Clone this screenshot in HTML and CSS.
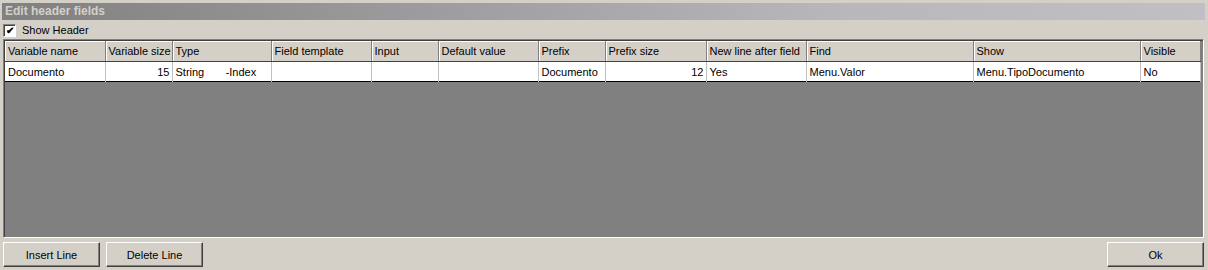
FILE: index.html
```html
<!DOCTYPE html>
<html>
<head>
<meta charset="utf-8">
<title>Edit header fields</title>
<link rel="stylesheet" href="styles.css">
</head>
<body>
<div class="window">
  <div class="caption">Edit header fields</div>
  <label class="check"><span class="box">&#10004;</span>Show Header</label>
  <div class="panel">
    <table class="grid">
      <colgroup>
        <col style="width:100px"><col style="width:67px"><col style="width:99px"><col style="width:100px">
        <col style="width:67px"><col style="width:100px"><col style="width:67px"><col style="width:101px">
        <col style="width:100px"><col style="width:167px"><col style="width:167px"><col style="width:60px">
      </colgroup>
      <tr class="head">
        <th>Variable name</th><th>Variable size</th><th>Type</th><th>Field template</th>
        <th>Input</th><th>Default value</th><th>Prefix</th><th>Prefix size</th>
        <th>New line after field</th><th>Find</th><th>Show</th><th>Visible</th>
      </tr>
      <tr>
        <td>Documento</td><td class="num">15</td><td>String&nbsp;&nbsp;&nbsp;&nbsp;&nbsp;&nbsp;&nbsp;-Index</td><td></td>
        <td></td><td></td><td>Documento</td><td class="num">12</td>
        <td>Yes</td><td>Menu.Valor</td><td>Menu.TipoDocumento</td><td>No</td>
      </tr>
    </table>
  </div>
  <div class="buttons">
    <button class="btn">Insert Line</button>
    <button class="btn">Delete Line</button>
    <span class="spacer"></span>
    <button class="btn">Ok</button>
  </div>
</div>
</body>
</html>
```
FILE: styles.css
```css
html, body {
  margin: 0;
  padding: 0;
  background: #d4d0c8;
}

body {
  font-family: "Liberation Sans", Arial, sans-serif;
  font-size: 11px;
  color: #000;
}

.window {
  width: 1208px;
  height: 270px;
  padding-top: 3px;
  box-sizing: border-box;
  display: flex;
  flex-direction: column;
}

.caption {
  margin: 0 3px 0 2px;
  height: 17px;
  line-height: 17px;
  padding-left: 3px;
  font-weight: bold;
  font-size: 12px;
  color: #d4d0c8;
  background: linear-gradient(to right, #808080, #b8b8bc 70%, #c0c0c4);
}

.check {
  display: flex;
  align-items: center;
  height: 16px;
  padding-left: 3px;
  margin-top: 2px;
}

.box {
  width: 11px;
  height: 11px;
  background: #fff;
  border: 1px solid;
  border-color: #808080 #fff #fff #808080;
  box-shadow: inset 1px 1px 0 #404040;
  font-size: 10px;
  line-height: 11px;
  text-align: center;
  margin-right: 6px;
  font-weight: bold;
}

.panel {
  margin: 1px 4px 0 3px;
  height: 199px;
  background: #808080;
  border: 1px solid;
  border-color: #808080 #fff #fff #808080;
  box-shadow: inset 1px 1px 0 #404040;
  padding: 1px 0 0 1px;
  box-sizing: border-box;
}

.grid {
  border-collapse: collapse;
  table-layout: fixed;
  width: 1195px;
  background: #fff;
  border-right: 1px solid #000;
  border-bottom: 1px solid #000;
}

.grid th, .grid td {
  height: 20px;
  padding: 0 2px 0 3px;
  white-space: nowrap;
  overflow: hidden;
  text-align: left;
  font-weight: normal;
}

.grid th {
  background: #d4d0c8;
  border-right: 1px solid #808080;
  border-bottom: 1px solid #404040;
  box-shadow: inset 1px 1px 0 #fff;
}

.grid td {
  border-right: 1px solid #c0c0c0;
  height: 19px;
}

.grid td.num {
  text-align: right;
}

.buttons {
  display: flex;
  margin-top: 4px;
  padding: 0 4px 0 3px;
  gap: 6px;
}

.spacer {
  flex: 1;
}

.btn {
  width: 97px;
  height: 25px;
  font-family: "Liberation Sans", Arial, sans-serif;
  font-size: 11px;
  background: #d4d0c8;
  border: 1px solid;
  border-color: #fff #404040 #404040 #fff;
  box-shadow: inset -1px -1px 0 #808080;
  padding: 0;
}
```
